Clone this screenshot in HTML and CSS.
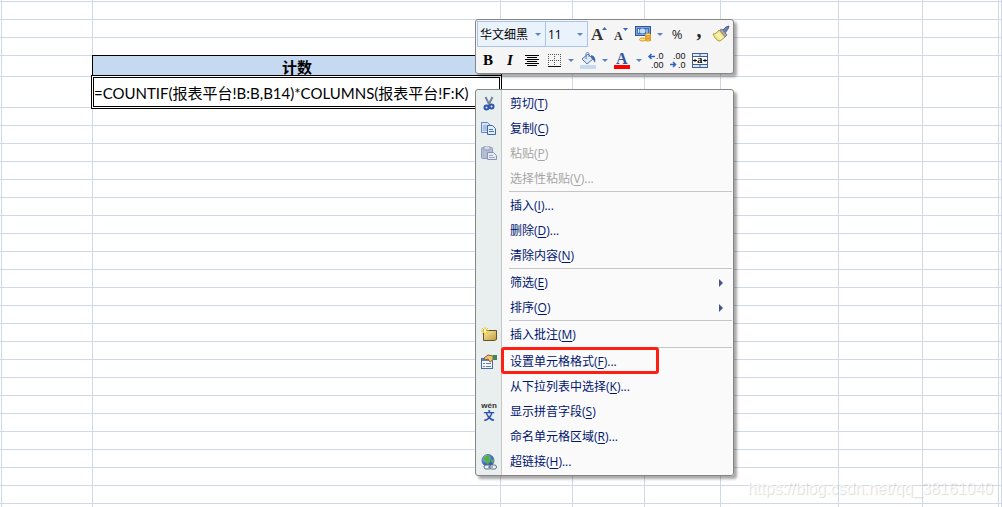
FILE: index.html
```html
<!DOCTYPE html>
<html lang="zh-CN">
<head>
    <meta charset="UTF-8">
    <meta name="viewport" content="width=device-width, initial-scale=1.0">
    <title>计数</title>
    <link rel="stylesheet" href="styles.css">
</head>
<body>
<div class="sheet">
    <table class="grid">
        <colgroup>
            <col class="col-edge"><col class="col-a"><col class="col-b"><col class="col-s"><col class="col-s"><col class="col-m"><col class="col-l"><col class="col-n"><col class="col-m"><col>
        </colgroup>
        <tr class="row-edge"><td></td><td></td><td></td><td></td><td></td><td></td><td></td><td></td><td></td><td></td></tr>
        <tr><td></td><td></td><td></td><td></td><td></td><td></td><td></td><td></td><td></td><td></td></tr>
        <tr><td></td><td></td><td></td><td></td><td></td><td></td><td></td><td></td><td></td><td></td></tr>
        <tr><td></td><td></td><td></td><td></td><td></td><td></td><td></td><td></td><td></td><td></td></tr>
        <tr class="row-head"><td></td><td></td><th class="head">计数</th><td></td><td></td><td></td><td></td><td></td><td></td><td></td></tr>
        <tr class="row-edit"><td></td><td></td><td class="active"><input class="formula" type="text" aria-label="公式" value="=COUNTIF(报表平台!B:B,B14)*COLUMNS(报表平台!F:K)"></td><td></td><td></td><td></td><td></td><td></td><td></td><td></td></tr>
        <tr><td></td><td></td><td></td><td></td><td></td><td></td><td></td><td></td><td></td><td></td></tr>
        <tr><td></td><td></td><td></td><td></td><td></td><td></td><td></td><td></td><td></td><td></td></tr>
        <tr><td></td><td></td><td></td><td></td><td></td><td></td><td></td><td></td><td></td><td></td></tr>
        <tr><td></td><td></td><td></td><td></td><td></td><td></td><td></td><td></td><td></td><td></td></tr>
        <tr><td></td><td></td><td></td><td></td><td></td><td></td><td></td><td></td><td></td><td></td></tr>
        <tr><td></td><td></td><td></td><td></td><td></td><td></td><td></td><td></td><td></td><td></td></tr>
        <tr><td></td><td></td><td></td><td></td><td></td><td></td><td></td><td></td><td></td><td></td></tr>
        <tr><td></td><td></td><td></td><td></td><td></td><td></td><td></td><td></td><td></td><td></td></tr>
        <tr><td></td><td></td><td></td><td></td><td></td><td></td><td></td><td></td><td></td><td></td></tr>
        <tr><td></td><td></td><td></td><td></td><td></td><td></td><td></td><td></td><td></td><td></td></tr>
        <tr><td></td><td></td><td></td><td></td><td></td><td></td><td></td><td></td><td></td><td></td></tr>
        <tr><td></td><td></td><td></td><td></td><td></td><td></td><td></td><td></td><td></td><td></td></tr>
        <tr><td></td><td></td><td></td><td></td><td></td><td></td><td></td><td></td><td></td><td></td></tr>
        <tr><td></td><td></td><td></td><td></td><td></td><td></td><td></td><td></td><td></td><td></td></tr>
        <tr><td></td><td></td><td></td><td></td><td></td><td></td><td></td><td></td><td></td><td></td></tr>
        <tr><td></td><td></td><td></td><td></td><td></td><td></td><td></td><td></td><td></td><td></td></tr>
        <tr><td></td><td></td><td></td><td></td><td></td><td></td><td></td><td></td><td></td><td></td></tr>
        <tr><td></td><td></td><td></td><td></td><td></td><td></td><td></td><td></td><td></td><td></td></tr>
        <tr><td></td><td></td><td></td><td></td><td></td><td></td><td></td><td></td><td></td><td></td></tr>
        <tr><td></td><td></td><td></td><td></td><td></td><td></td><td></td><td></td><td></td><td></td></tr>
        <tr><td></td><td></td><td></td><td></td><td></td><td></td><td></td><td></td><td></td><td></td></tr>
        <tr><td></td><td></td><td></td><td></td><td></td><td></td><td></td><td></td><td></td><td></td></tr>
        <tr><td></td><td></td><td></td><td></td><td></td><td></td><td></td><td></td><td></td><td></td></tr>
    </table>

    <div class="popup">
        <!-- mini toolbar -->
        <div class="toolbar">
            <div class="tools">
                <div class="combo combo-font">
                    <select aria-label="字体"><option>华文细黑</option></select>
                </div>
                <div class="combo combo-size">
                    <select aria-label="字号"><option>11</option></select>
                </div>
                <button class="tool" aria-label="增大字号">
                    <svg width="18" height="18"><text x="1" y="15" class="serif" font-size="17" fill="#333">A</text><path d="M12 5l2.500-3 2.500 3z" fill="#3a68b8"/></svg>
                </button>
                <button class="tool" aria-label="减小字号">
                    <svg width="18" height="18"><text x="2" y="15" class="serif" font-size="12" fill="#333">A</text><path d="M11 3h5l-2.500 3z" fill="#3a68b8"/></svg>
                </button>
                <button class="tool" aria-label="会计数字格式">
                    <svg width="18" height="18">
                        <rect x="1.500" y="1.500" width="15" height="9" fill="#7da2d8" stroke="#2f569c"/>
                        <rect x="3" y="3" width="12" height="6" fill="#3e6fbc"/>
                        <ellipse cx="8.500" cy="6" rx="3" ry="2.500" fill="#c8dbf5"/>
                        <path d="M4.500 4v4M13 4v4" stroke="#dce9fa"/>
                        <path d="M11 10h6v6h-6z" fill="#e0a020"/>
                        <ellipse cx="14" cy="9.500" rx="2.500" ry="1" fill="#fff0a8" stroke="#d99a20"/>
                        <ellipse cx="14" cy="12" rx="2.500" ry="1" fill="#ffe17a" stroke="#d99a20"/>
                        <ellipse cx="14" cy="15" rx="2.500" ry="1" fill="#ffe17a" stroke="#d99a20"/>
                        <ellipse cx="8.500" cy="14.500" rx="3" ry="1.500" fill="#ffe58a" stroke="#d99a20"/>
                    </svg>
                </button>
                <button class="drop" aria-label="更多会计格式"></button>
                <button class="tool percent">%</button>
                <button class="tool comma" aria-label="千位分隔样式">,</button>
                <button class="tool" aria-label="格式刷">
                    <svg width="18" height="18">
                        <path d="M11 5l3-3 3-1-1 3-3 4z" fill="#6d83b8" stroke="#4a5f98"/>
                        <path d="M8 5l2-1 5 6-2 2z" fill="#a9adb9" stroke="#74798a"/>
                        <path d="M7 5l6 7-5 4c-3 0-5-3-7-7 2 0 4-1 6-4z" fill="#f5e88f" stroke="#b09a3c"/>
                        <path d="M4 9l5 5M6 8l4 5" stroke="#fffbd8"/>
                    </svg>
                </button>
            </div>
            <div class="tools">
                <button class="tool bold">B</button>
                <button class="tool italic">I</button>
                <button class="tool" aria-label="居中">
                    <svg width="18" height="18"><path d="M2 4.500h14M4 6.500h10M2 8.500h14M4 10.500h10M2 12.500h14M4 14.500h10" stroke="#000"/></svg>
                </button>
                <button class="tool" aria-label="边框">
                    <svg width="18" height="18"><path d="M3 3.500h13M3 9.500h13M3.500 3v12M9.500 3v12M15.500 3v12" stroke="#555" stroke-dasharray="1 1"/><path d="M3 15.500h13" stroke="#111"/></svg>
                </button>
                <button class="drop" aria-label="更多边框"></button>
                <button class="tool" aria-label="填充颜色">
                    <svg width="18" height="18">
                        <rect x="1" y="14" width="16" height="4" fill="#c5d9f1"/>
                        <path d="M3 8l6-5 5 5-6 5z" fill="#dbe7f7" stroke="#5c79a8"/>
                        <path d="M7 8V3c0-2 3-2 3 0v3" fill="none" stroke="#5c79a8"/>
                        <path d="M12 4c4 1 5 4 4 8-1-2-2-4-4-5z" fill="#3f6bb0"/>
                    </svg>
                </button>
                <button class="drop" aria-label="更多填充颜色"></button>
                <button class="tool" aria-label="字体颜色">
                    <svg width="18" height="18"><text x="3" y="13" class="serif" font-size="16" fill="#31569d">A</text><rect x="1" y="14" width="16" height="4" fill="#f00"/></svg>
                </button>
                <button class="drop" aria-label="更多字体颜色"></button>
                <button class="tool" aria-label="增加小数位数">
                    <svg width="18" height="18"><text x="9" y="8" class="digits">.0</text><text x="4" y="17" class="digits">.00</text><path d="M8 5.500H2M4.500 3L2 5.500 4.500 8" fill="none" stroke="#2f62c5" stroke-width="1.500"/></svg>
                </button>
                <button class="tool" aria-label="减少小数位数">
                    <svg width="18" height="18"><text x="4" y="8" class="digits">.00</text><text x="9" y="17" class="digits">.0</text><path d="M1 13.500h6M4 11l2.500 2.500L4 16" fill="none" stroke="#2f62c5" stroke-width="1.500"/></svg>
                </button>
                <button class="tool" aria-label="合并后居中">
                    <svg width="18" height="18">
                        <rect x="1.500" y="2.500" width="15" height="14" fill="#dce8f8" stroke="#3e5f92"/>
                        <path d="M9 3v3M9 13v3M2 5.500h14M2 13.500h14" stroke="#3e5f92"/>
                        <rect x="2" y="6" width="14" height="7" fill="#fff"/>
                        <path d="M2 9.500h4M16 9.500h-4M4 8v3M14 8v3" stroke="#111"/>
                        <text x="6" y="12" class="serif" font-size="11" fill="#111">a</text>
                    </svg>
                </button>
            </div>
        </div>

        <!-- context menu -->
        <ul class="menu">
            <li><button class="item">
                <svg class="icon" width="16" height="16"><path d="M4.500 1l4 8M11.500 1l-4 8" stroke="#75849c" stroke-width="2" fill="none"/><circle cx="5.500" cy="11.500" r="2" fill="none" stroke="#2c55b0" stroke-width="2"/><circle cx="10.500" cy="10.500" r="2" fill="none" stroke="#2c55b0" stroke-width="2"/></svg>
                <span>剪切(<u>T</u>)</span></button></li>
            <li><button class="item">
                <svg class="icon" width="16" height="16"><path d="M.5 1.500h6l3 3v7h-9z" fill="#d5e3f7" stroke="#6787ba"/><path d="M2 5h4M2 7h4M2 9h4" stroke="#7f9dcc"/><path d="M6.500 4.500h5l3 3v6h-8z" fill="#e2edfc" stroke="#3f66a8"/><path d="M8 8.500h4M8 10.500h5" stroke="#4f79bd"/></svg>
                <span>复制(<u>C</u>)</span></button></li>
            <li><button class="item" disabled>
                <svg class="icon" width="16" height="16"><rect x=".5" y="1.500" width="11" height="11" rx="1" fill="#b4bdd2" stroke="#929dba"/><rect x="3" y="0" width="6" height="4" rx="1" fill="#d5dae6" stroke="#929dba"/><path d="M6.500 6.500h6l3 3v4h-9z" fill="#e3e8f2" stroke="#8794b5"/><path d="M8 9.500h4M8 11.500h6" stroke="#a3aec8"/></svg>
                <span>粘贴(<u>P</u>)</span></button></li>
            <li><button class="item" disabled><span>选择性粘贴(<u>V</u>)...</span></button></li>
            <li class="separator"></li>
            <li><button class="item"><span>插入(<u>I</u>)...</span></button></li>
            <li><button class="item"><span>删除(<u>D</u>)...</span></button></li>
            <li><button class="item"><span>清除内容(<u>N</u>)</span></button></li>
            <li class="separator"></li>
            <li><button class="item has-sub"><span>筛选(<u>E</u>)</span></button></li>
            <li><button class="item has-sub"><span>排序(<u>O</u>)</span></button></li>
            <li class="separator"></li>
            <li><button class="item">
                <svg class="icon" width="16" height="16"><defs><linearGradient id="note" x2="1" y2="1"><stop offset="0" stop-color="#fff0a5"/><stop offset="1" stop-color="#bd9a3d"/></linearGradient></defs><path d="M2.500 3.500h13v9l-2 1h-11z" fill="url(#note)" stroke="#655326"/><path d="M4 0v8M0 4h8M1 1l6 6M7 1L1 7" stroke="#f2c51c"/><circle cx="4" cy="4" r="1.500" fill="#fffbd0"/></svg>
                <span>插入批注(<u>M</u>)</span></button></li>
            <li class="separator"></li>
            <li><button class="item marked">
                <svg class="icon" width="16" height="16"><rect x=".5" y="4.500" width="11" height="10" fill="#f3f7fd" stroke="#4c6a9d"/><path d="M1 6h10" stroke="#5e83c0" stroke-width="2"/><path d="M2 9.500h2M5 9.500h5M2 12.500h2M5 12.500h5" stroke="#5e7fb5"/><path d="M3 4l4-3 5 1v4L9 8 7 5 4 6z" fill="#edc276" stroke="#8c6227"/><path d="M12 1h4v5h-4z" fill="#3d8a58"/></svg>
                <span>设置单元格格式(<u>F</u>)...</span></button></li>
            <li><button class="item"><span>从下拉列表中选择(<u>K</u>)...</span></button></li>
            <li><button class="item">
                <span class="icon phonetic"><span class="pinyin">wén</span><span class="wen">文</span></span>
                <span>显示拼音字段(<u>S</u>)</span></button></li>
            <li><button class="item"><span>命名单元格区域(<u>R</u>)...</span></button></li>
            <li><button class="item">
                <svg class="icon" width="16" height="16"><defs><radialGradient id="globe" cx=".35" cy=".3"><stop offset="0" stop-color="#cfe5ff"/><stop offset="1" stop-color="#2d62b8"/></radialGradient></defs><circle cx="7" cy="6.500" r="6" fill="url(#globe)" stroke="#5c7fb4"/><path d="M3 3l4-2 3 2-2 2 1 3-3 3-1-4-3-1zM10 5l3 1-1 3-2-1z" fill="#55b045"/><rect x="3" y="11" width="7" height="4" rx="2" fill="#eef2f8" stroke="#5b6c8c"/><rect x="8.500" y="11" width="7" height="4" rx="2" fill="#eef2f8" stroke="#5b6c8c"/><path d="M7 13h5" stroke="#5b6c8c"/></svg>
                <span>超链接(<u>H</u>)...</span></button></li>
        </ul>
    </div>

    <div class="watermark">https://blog.csdn.net/qq_38161040</div>
</div>
</body>
</html>
```
FILE: styles.css
```css
* {
    box-sizing: border-box;
}
body {
    margin: 0;
    background: #fff;
    font-family: "Open Sans", "Noto Sans CJK SC", sans-serif;
    font-size: 12px;
}
button, select, input {
    font-family: inherit;
    margin: 0;
    padding: 0;
    border: 0;
    background: none;
}
.sheet {
    position: relative;
    height: 100vh;
    overflow: hidden;
}

/* cells */
.grid {
    width: 100%;
    table-layout: fixed;
    border-collapse: separate;
    border-spacing: 0;
}
.grid tr {
    height: 18px;
}
.grid td, .grid th {
    padding: 0;
    border-right: 1px solid #d0d7e5;
    border-bottom: 1px solid #d0d7e5;
}
.grid .row-edge { height: 2px; }
.grid .row-head { height: 21px; }
.grid .row-edit { height: 31px; }
.col-edge { width: 2px; }
.col-a { width: 91px; }
.col-b { width: 408px; }
.col-s { width: 72px; }
.col-m { width: 76px; }
.col-l { width: 118px; }
.col-n { width: 84px; }
.grid .head {
    position: relative;
    background: #c5d9f1;
    box-shadow: 0 0 0 1px #000;
    border: 0;
    font-size: 15px;
    line-height: 20px;
}
.active {
    position: relative;
}
.formula {
    position: absolute;
    inset: -2px;
    width: calc(100% + 4px);
    border: 3px double #000;
    background: #fff;
    font-family: Lato, "Noto Sans CJK SC", sans-serif;
    font-size: 15px;
    color: #000;
}

/* popups */
.popup {
    position: absolute;
    left: 475px;
    top: 19px;
    width: 259px;
    display: flex;
    flex-direction: column;
    gap: 15px;
}
.toolbar, .menu {
    border: 1px solid #868686;
    border-radius: 3px;
    box-shadow: 3px 3px 3px rgba(0, 0, 0, 0.35);
}
.toolbar {
    padding: 1px 1px 0;
    background: #f5f5f5;
}
.tools {
    display: flex;
    height: 26px;
}
.combo {
    position: relative;
    border: 1px solid #abc5e8;
    background: #eaf2fb;
}
.combo + .combo {
    border-left: 0;
}
.combo-font { width: 69px; }
.combo-size { width: 42px; }
.combo select {
    appearance: none;
    width: 100%;
    height: 100%;
    padding-left: 2px;
    font-size: 12px;
    color: #000;
}
.combo::after, .drop::after {
    content: "";
    border: 3px solid transparent;
    border-top-color: #5b84c4;
    border-bottom: 0;
}
.combo::after {
    position: absolute;
    right: 4px;
    top: 11px;
    pointer-events: none;
}
.tool, .drop {
    display: flex;
    align-items: center;
    justify-content: center;
    height: 26px;
    color: #222;
}
.tool { width: 22px; }
.drop { width: 12px; }
.tool:hover, .drop:hover {
    background: #ffe7a2;
}
.percent {
    font-size: 13px;
}
.comma, .bold, .italic, .serif {
    font-family: "Liberation Serif", serif;
    font-weight: bold;
}
.comma {
    font-size: 20px;
    line-height: 14px;
    padding-bottom: 8px;
}
.bold, .italic {
    font-size: 15px;
    color: #000;
}
.italic {
    font-style: italic;
}
.digits {
    font-family: "Liberation Sans", sans-serif;
    font-size: 9px;
    fill: #111;
}

.menu {
    list-style: none;
    margin: 0;
    padding: 1px 0;
    background: linear-gradient(to right, #e9eeee 25px, #c5c5c5 25px, #c5c5c5 26px, #fafafa 26px);
}
.item {
    position: relative;
    display: flex;
    align-items: center;
    width: 100%;
    height: 25px;
    padding-left: 34px;
    font-size: 12px;
    line-height: 18px;
    color: #00156e;
    text-align: left;
}
.item:disabled {
    color: #a5a5a5;
}
.item u {
    text-underline-offset: 2px;
}
.icon {
    position: absolute;
    left: 5px;
    top: 5px;
}
.separator {
    height: 2px;
    margin: 0 1px 0 33px;
    border-top: 1px solid #c5c5c5;
}
.has-sub::after {
    content: "";
    position: absolute;
    right: 10px;
    top: 9px;
    border: 4px solid transparent;
    border-left-color: #44548c;
    border-right: 0;
}
.marked::after {
    content: "";
    position: absolute;
    left: 25px;
    right: 74px;
    top: -2px;
    bottom: 0;
    border: 3px solid #ff1f12;
    border-radius: 3px;
}
.phonetic {
    top: 3px;
    display: flex;
    flex-direction: column;
    align-items: center;
    width: 16px;
}
.pinyin {
    font-family: "Liberation Sans", sans-serif;
    font-size: 8px;
    line-height: 8px;
    font-weight: bold;
    color: #333;
}
.wen {
    font-family: "Noto Sans CJK SC", sans-serif;
    font-size: 11px;
    line-height: 11px;
    font-weight: bold;
    color: #2a4fa8;
}

.watermark {
    position: absolute;
    right: 9px;
    bottom: 8px;
    font-family: "Liberation Sans", sans-serif;
    font-size: 16px;
    line-height: 20px;
    color: rgba(255, 255, 255, 0.8);
    text-shadow: 1px 1px 1px rgba(0, 0, 0, 0.15);
}
```
